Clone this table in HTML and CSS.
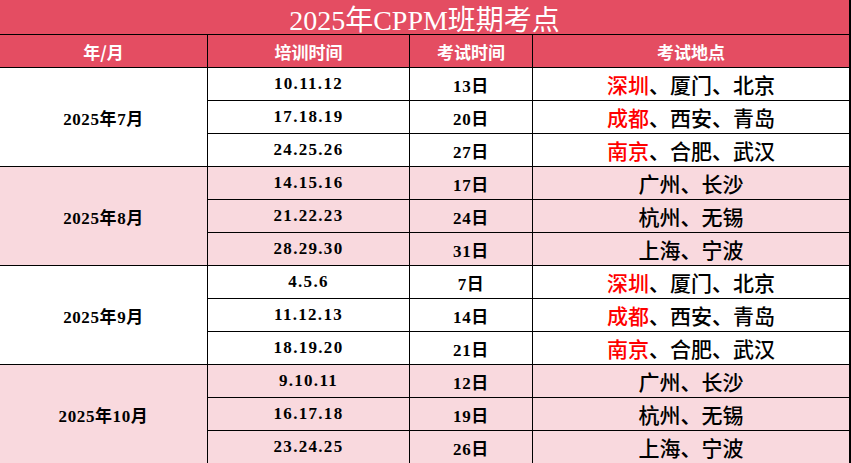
FILE: index.html
```html
<!DOCTYPE html>
<html lang="zh-CN">
<head>
<meta charset="utf-8">
<title>2025年CPPM班期考点</title>
<link rel="stylesheet" href="styles.css">
</head>
<body>
<div class="sheet">
  <div class="title">2025年CPPM班期考点</div>

  <div class="hd">年/月</div>
  <div class="hd">培训时间</div>
  <div class="hd">考试时间</div>
  <div class="hd last">考试地点</div>

  <div class="month">2025年7月</div>
  <div class="date">10.11.12</div><div class="num">13日</div><div class="place"><span class="red">深圳</span>、厦门、北京</div>
  <div class="date">17.18.19</div><div class="num">20日</div><div class="place"><span class="red">成都</span>、西安、青岛</div>
  <div class="date">24.25.26</div><div class="num">27日</div><div class="place"><span class="red">南京</span>、合肥、武汉</div>

  <div class="month pink">2025年8月</div>
  <div class="date pink">14.15.16</div><div class="num pink">17日</div><div class="place pink">广州、长沙</div>
  <div class="date pink">21.22.23</div><div class="num pink">24日</div><div class="place pink">杭州、无锡</div>
  <div class="date pink">28.29.30</div><div class="num pink">31日</div><div class="place pink">上海、宁波</div>

  <div class="month">2025年9月</div>
  <div class="date">4.5.6</div><div class="num">7日</div><div class="place"><span class="red">深圳</span>、厦门、北京</div>
  <div class="date">11.12.13</div><div class="num">14日</div><div class="place"><span class="red">成都</span>、西安、青岛</div>
  <div class="date">18.19.20</div><div class="num">21日</div><div class="place"><span class="red">南京</span>、合肥、武汉</div>

  <div class="month pink">2025年10月</div>
  <div class="date pink">9.10.11</div><div class="num pink">12日</div><div class="place pink">广州、长沙</div>
  <div class="date pink">16.17.18</div><div class="num pink">19日</div><div class="place pink">杭州、无锡</div>
  <div class="date pink">23.24.25</div><div class="num pink">26日</div><div class="place pink">上海、宁波</div>
</div>
</body>
</html>
```

FILE: styles.css
```css
html, body {
  margin: 0;
  padding: 0;
  background: #ffffff;
}

.sheet {
  width: 851px;
  display: grid;
  grid-template-columns: 208px 202px 123px 318px;
  grid-template-rows: 35px;
  grid-auto-rows: 33px;
}

.sheet > div {
  box-sizing: border-box;
  border-right: 1px solid #000;
  border-bottom: 1px solid #000;
  display: flex;
  align-items: center;
  justify-content: center;
  white-space: nowrap;
  color: #000;
}

.sheet > .title {
  grid-column: 1 / span 4;
  background: #e44d62;
  color: #fff;
  font-family: "Liberation Serif", "Noto Sans CJK SC", serif;
  font-size: 28px;
  font-weight: normal;
  border-right-width: 2px;
  padding-top: 1px;
}

.sheet > .hd {
  background: #e44d62;
  color: #fff;
  font-family: "Noto Sans CJK SC", sans-serif;
  font-weight: bold;
  font-size: 17px;
}

.sheet > .hd.last {
  border-right-width: 2px;
}

.month,
.num {
  grid-row: auto;
  font-family: "Liberation Serif", "Noto Sans CJK SC", serif;
  font-weight: bold;
  font-size: 17px;
  letter-spacing: 0.6px;
}

.sheet > .month {
  grid-row: span 3;
}

.date {
  font-family: "Liberation Serif", "Noto Sans CJK SC", serif;
  font-weight: bold;
  font-size: 17px;
  letter-spacing: 1.3px;
}

.sheet > .place {
  font-family: "Noto Sans CJK SC", sans-serif;
  font-weight: 500;
  font-size: 21px;
  border-right-width: 2px;
}

.sheet > div .red {
  color: #ff0000;
}

.sheet > .pink {
  background: #f9d9de;
}
```
